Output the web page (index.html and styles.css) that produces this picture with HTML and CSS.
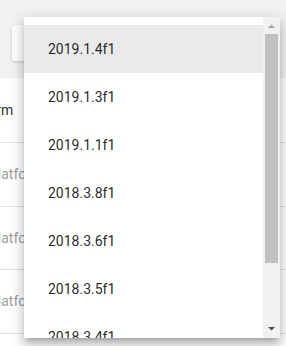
FILE: index.html
```html
<!DOCTYPE html>
<html lang="en">
<head>
    <meta charset="UTF-8">
    <meta name="viewport" content="width=device-width, initial-scale=1.0">
    <title>Versions</title>
    <link rel="stylesheet" href="styles.css">
</head>
<body>
    <div class="page">
        <div class="toolbar">
            <div class="select"></div>
        </div>
        <div class="table">
            <div class="thead"><span class="cell head">Platform</span></div>
            <div class="row"><span class="cell">Platform</span></div>
            <div class="row"><span class="cell">Platform</span></div>
            <div class="row"><span class="cell">Platform</span></div>
            <div class="row last"></div>
        </div>
    </div>

    <div class="menu">
        <ul class="options">
            <li class="option active">2019.1.4f1</li>
            <li class="option">2019.1.3f1</li>
            <li class="option">2019.1.1f1</li>
            <li class="option">2018.3.8f1</li>
            <li class="option">2018.3.6f1</li>
            <li class="option">2018.3.5f1</li>
            <li class="option">2018.3.4f1</li>
        </ul>
        <div class="scrollbar">
            <svg class="arrow" width="17" height="17" viewBox="0 0 17 17"><polygon points="5,11 12,11 8.5,7.5" fill="#a3a3a3"/></svg>
            <div class="track"><div class="thumb"></div></div>
            <svg class="arrow" width="17" height="17" viewBox="0 0 17 17"><polygon points="5,6 12,6 8.5,9.5" fill="#505050"/></svg>
        </div>
    </div>
</body>
</html>
```

FILE: styles.css
```css
*{
    margin: 0;
    padding: 0;
    box-sizing: border-box;
}
html{
    height: 346px;
    overflow: hidden;
}
body{
    width: 286px;
    height: 346px;
    overflow: hidden;
    background: #fff;
    font-family: Roboto, "Noto Sans", sans-serif;
    font-size: 14px;
    position: relative;
}
.page{
    height: 346px;
    overflow: hidden;
}
.toolbar{
    height: 78px;
    background: #f1f2f4;
    padding: 25px 0 0 12px;
}
.select{
    width: 220px;
    height: 36px;
    background: #fff;
    border-radius: 3px;
    box-shadow: 0 1px 3px rgba(0,0,0,.18);
}
.thead,
.row{
    display: flex;
    align-items: center;
    border-bottom: 1px solid #e0e0e0;
    overflow: hidden;
}
.thead{
    height: 65px;
}
.row{
    height: 63.5px;
}
.row.last{
    height: 13px;
    border-bottom: none;
}
.cell{
    white-space: nowrap;
    color: #9e9e9e;
    margin-left: -11px;
}
.cell.head{
    color: #333;
    margin-left: -41px;
}

/* dropdown */
.menu{
    position: absolute;
    left: 24px;
    top: 17px;
    width: 256px;
    height: 321px;
    background: #fff;
    display: flex;
    overflow: hidden;
    box-shadow: 0 5px 5px -3px rgba(0,0,0,.2), 0 8px 10px 1px rgba(0,0,0,.14), 0 3px 14px 2px rgba(0,0,0,.12);
}
.options{
    flex: 1;
    list-style: none;
    padding-top: 8px;
}
.option{
    height: 48px;
    line-height: 48px;
    padding-left: 24px;
    color: rgba(0,0,0,.87);
}
.option.active{
    background: #eaeaea;
}
.scrollbar{
    width: 17px;
    background: #f1f1f1;
    display: flex;
    flex-direction: column;
}
.arrow{
    display: block;
    flex: none;
}
.track{
    flex: 1;
    padding: 0 2px;
}
.thumb{
    height: 229px;
    background: #c1c1c1;
}
```
